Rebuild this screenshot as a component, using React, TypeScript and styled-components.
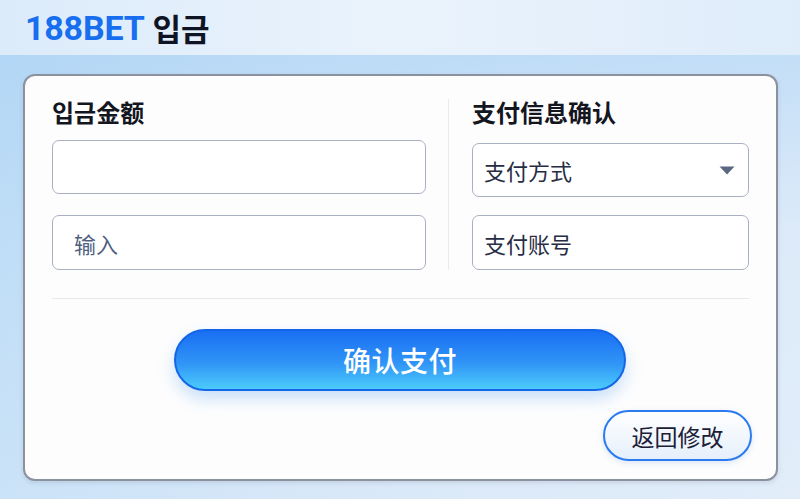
import React, { FC } from 'react';
import styled, { createGlobalStyle } from 'styled-components';

const GlobalStyle = createGlobalStyle`
  html, body {
    margin: 0;
    padding: 0;
  }
  body {
    font-family: 'Noto Sans CJK SC', 'Noto Sans', sans-serif;
  }
`;

const App: FC = () => {
  return (
    <>
      <GlobalStyle />
      <Page>
        <Header>
          <Brand>188BET</Brand>
          <Deposit>입금</Deposit>
        </Header>
        <Main>
          <Card>
            <Columns>
              <Column>
                <Label lang="ko">입금金额</Label>
                <Field $top={15} $height={54} />
                <Field $top={21} $height={55}>
                  <Placeholder>输入</Placeholder>
                </Field>
              </Column>
              <VDivider />
              <Column>
                <Label>支付信息确认</Label>
                <Field $top={18} $height={54}>
                  <Value>支付方式</Value>
                  <Caret viewBox="0 0 16 9" width={16} height={9}>
                    <path d="M0.5 0.5 H15.5 L8 8.5 Z" fill="#5b6681" />
                  </Caret>
                </Field>
                <Field $top={18} $height={55}>
                  <Value>支付账号</Value>
                </Field>
              </Column>
            </Columns>
            <HDivider />
            <PrimaryButton>确认支付</PrimaryButton>
            <Footer>
              <SecondaryButton>返回修改</SecondaryButton>
            </Footer>
          </Card>
        </Main>
      </Page>
    </>
  );
};

const Page = styled.div`
  width: 800px;
  height: 499px;
  overflow: hidden;
  display: flex;
  flex-direction: column;
  background: linear-gradient(90deg, #bcdcf6 0%, #d4e6f8 45%, #e2edf9 100%);
`;

const Header = styled.div`
  height: 55px;
  flex-shrink: 0;
  display: flex;
  align-items: center;
  gap: 8px;
  padding-left: 25px;
  box-sizing: border-box;
  background: linear-gradient(90deg, #dcebfa 0%, #eaf3fc 50%, #dfecfa 100%);
`;

const Brand = styled.span`
  font-family: Roboto, 'Liberation Sans', sans-serif;
  font-weight: 700;
  font-size: 34px;
  color: #176ff0;
  letter-spacing: -0.2px;
`;

const Deposit = styled.span`
  font-family: 'Noto Sans CJK KR', sans-serif;
  font-weight: 700;
  font-size: 31px;
  color: #0f1424;
`;

const Main = styled.div`
  flex: 1;
  padding: 19px 22px 19px 23px;
  background: linear-gradient(180deg, rgba(170, 210, 245, 0.55) 0%, rgba(200, 225, 248, 0.2) 40%, rgba(225, 236, 249, 0.4) 100%);
  box-sizing: border-box;
  display: flex;
`;

const Card = styled.div`
  flex: 1;
  background: #fdfdfd;
  border: 2px solid #8c919e;
  border-radius: 12px;
  padding: 23px 25px 18px 27px;
  box-sizing: border-box;
  display: flex;
  flex-direction: column;
  box-shadow: 0 2px 4px rgba(80, 90, 110, 0.15);
`;

const Columns = styled.div`
  display: grid;
  grid-template-columns: 374px auto 277px;
  justify-content: start;
`;

const Column = styled.div`
  display: flex;
  flex-direction: column;
`;

const VDivider = styled.div`
  background: #e8ebf0;
  width: 1px;
  margin: 0 23px 0 22px;
`;

const Label = styled.div`
  font-family: 'Noto Sans CJK SC', 'Noto Sans CJK KR', sans-serif;
  font-weight: 700;
  font-size: 24px;
  line-height: 26px;
  color: #14161f;
`;

const Field = styled.div<{ $top: number; $height: number }>`
  margin-top: ${p => p.$top}px;
  height: ${p => p.$height}px;
  border: 1.5px solid #a9b0bf;
  border-radius: 7px;
  background: #ffffff;
  box-sizing: border-box;
  display: flex;
  align-items: center;
  padding: 0 12px 0 11px;
`;

const Placeholder = styled.span`
  font-size: 22px;
  color: #4f5f7f;
  padding-left: 10px;
`;

const Value = styled.span`
  flex: 1;
  font-size: 22px;
  color: #262d44;
`;

const Caret = styled.svg`
  margin-right: 1px;
  margin-top: 1px;
`;

const HDivider = styled.div`
  height: 1px;
  background: #e6e9ee;
  margin-top: 28px;
  margin-right: 2px;
`;

const PrimaryButton = styled.button`
  align-self: center;
  margin-top: 30px;
  margin-right: 3px;
  width: 452px;
  height: 62px;
  border-radius: 31px;
  border: 2px solid #1466e8;
  background: linear-gradient(180deg, #1a6ff3 0%, #2f94f6 55%, #4ccbfb 100%);
  box-shadow: 0 8px 16px rgba(70, 150, 240, 0.28);
  color: #ffffff;
  font-family: 'Noto Sans CJK SC', sans-serif;
  font-size: 28px;
  font-weight: 500;
  letter-spacing: 0.5px;
  cursor: pointer;
`;

const Footer = styled.div`
  display: flex;
  justify-content: flex-end;
  margin-top: 19px;
`;

const SecondaryButton = styled.button`
  width: 149px;
  height: 51px;
  margin-right: -1px;
  border-radius: 26px;
  border: 2px solid #2b7bef;
  background: linear-gradient(180deg, #ffffff 0%, #e5effb 100%);
  box-shadow: 0 2px 6px rgba(90, 140, 210, 0.2);
  color: #1b2036;
  font-family: 'Noto Sans CJK SC', sans-serif;
  font-size: 23px;
  cursor: pointer;
`;

export default App;
